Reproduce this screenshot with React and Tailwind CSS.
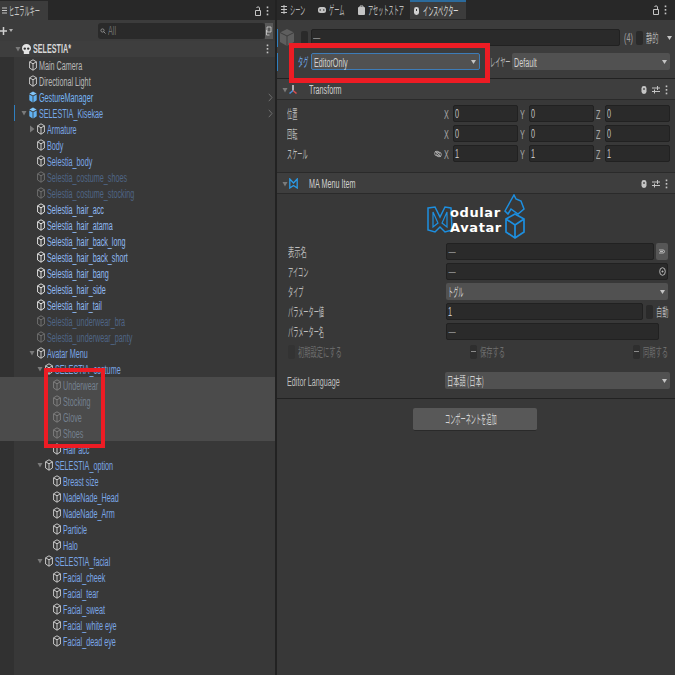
import React from "react";

const SANS = "[font-family:'Liberation_Sans','Noto_Sans_CJK_JP',sans-serif]";

function T({ children, className = "" }) {
  return (
    <span className={`inline-block origin-left scale-x-[.6] whitespace-nowrap font-['Liberation_Sans','Noto_Sans_CJK_JP',sans-serif] text-[12px] leading-none ${className}`}>
      {children}
    </span>
  );
}
function K({ children, className = "" }) {
  return (
    <span className={`inline-block origin-left scale-x-[.43] whitespace-nowrap font-['Noto_Sans_CJK_JP','Liberation_Sans',sans-serif] text-[12px] leading-none ${className}`}>
      {children}
    </span>
  );
}
function Han({ children, className = "" }) {
  return (
    <span className={`inline-block origin-left scale-x-[.52] whitespace-nowrap font-['Noto_Sans_CJK_JP','Liberation_Sans',sans-serif] text-[12px] leading-none ${className}`}>
      {children}
    </span>
  );
}

function Cube({ color = "#c8c8c8" }) {
  return (
    <svg width="8" height="12" viewBox="0 0 8 12" fill="none" stroke={color} strokeWidth="1" className="shrink-0">
      <path d="M4 .8 7.400 2.800V9L4 11.200.6 9V2.800Z M.6 2.800 4 4.800 7.400 2.800 M4 4.800V11.200" />
    </svg>
  );
}
function SolidCube() {
  return (
    <svg width="8" height="12" viewBox="0 0 8 12" className="shrink-0">
      <path d="M4 .5 7.600 2.600 4 4.600.4 2.600Z" fill="#80c4f8" />
      <path d="M.3 3.400 3.600 5.300V11.400L.3 9.300ZM7.700 3.400 4.400 5.300V11.400L7.700 9.300Z" fill="#62b2f2" />
    </svg>
  );
}
function ArrowDown({ color = "#7a7a7a" }) {
  return (
    <svg width="6" height="6" viewBox="0 0 6 6" className="shrink-0"><path d="M.5 1h5L3 5.500Z" fill={color} /></svg>
  );
}
function ArrowRight() {
  return (
    <svg width="6" height="8" viewBox="0 0 6 8" className="shrink-0"><path d="M1 .5v7L5.500 4Z" fill="#7a7a7a" /></svg>
  );
}
function Chevron() {
  return (
    <svg width="5" height="9" viewBox="0 0 5 9" fill="none" stroke="#6e6e6e" strokeWidth="1" className="shrink-0"><path d="M.8.8 4 4.500.8 8.200" /></svg>
  );
}
function Lock() {
  return (
    <svg width="6" height="10" viewBox="0 0 6 10" fill="none" stroke="#c4c4c4" strokeWidth="1" className="shrink-0">
      <path d="M.5 4.500H5.500V9.500H.5Z M4.500 4.500V2C4.500.5 1.800.5 1.500 2" />
    </svg>
  );
}
function Dots({ color = "#c4c4c4" }) {
  return (
    <svg width="3" height="10" viewBox="0 0 3 10" className="shrink-0" fill={color}>
      <rect x=".7" y=".5" width="1.600" height="1.700" /><rect x=".7" y="4" width="1.600" height="1.700" /><rect x=".7" y="7.600" width="1.600" height="1.700" />
    </svg>
  );
}
function ComponentTools() {
  return (
    <div className="ml-auto flex shrink-0 items-center gap-[5px]">
      <svg width="6" height="10" viewBox="0 0 6 10" className="shrink-0"><rect x=".5" y="1" width="5" height="8" rx="2.400" fill="#c4c4c4" /><rect x="2.400" y="3" width="1.200" height="2" fill="#383838" /></svg>
      <svg width="8" height="9" viewBox="0 0 8 9" stroke="#c4c4c4" strokeWidth="1" fill="none" className="shrink-0"><path d="M0 3h8M0 6.500h8M5.500 1v4M2.500 4.500v4" /></svg>
      <Dots />
    </div>
  );
}

const B = "#7aa6e6";
const L = "#8fb8f2";
const D = "#4f6585";
const G = "#74808f";

const rows = [
  { t: "Main Camera", d: 0, c: "#b8b8b8" },
  { t: "Directional Light", d: 0, c: "#b8b8b8" },
  { t: "GestureManager", d: 0, c: "#76b4f4", solid: true, chev: true },
  { t: "SELESTIA_Kisekae", d: 0, c: "#76a8ea", solid: true, arrow: "down", chev: true, mark: true },
  { t: "Armature", d: 1, c: B, arrow: "right" },
  { t: "Body", d: 1, c: B },
  { t: "Selestia_body", d: 1, c: B },
  { t: "Selestia_costume_shoes", d: 1, c: D, ic: "#6e6e6e" },
  { t: "Selestia_costume_stocking", d: 1, c: D, ic: "#6e6e6e" },
  { t: "Selestia_hair_acc", d: 1, c: L, ic: "#e0e0e0" },
  { t: "Selestia_hair_atama", d: 1, c: L, ic: "#e0e0e0" },
  { t: "Selestia_hair_back_long", d: 1, c: L, ic: "#e0e0e0" },
  { t: "Selestia_hair_back_short", d: 1, c: L, ic: "#e0e0e0" },
  { t: "Selestia_hair_bang", d: 1, c: L, ic: "#e0e0e0" },
  { t: "Selestia_hair_side", d: 1, c: L, ic: "#e0e0e0" },
  { t: "Selestia_hair_tail", d: 1, c: L, ic: "#e0e0e0" },
  { t: "Selestia_underwear_bra", d: 1, c: D, ic: "#6e6e6e" },
  { t: "Selestia_underwear_panty", d: 1, c: D, ic: "#6e6e6e" },
  { t: "Avatar Menu", d: 1, c: B, arrow: "down" },
  { t: "SELESTIA_costume", d: 2, c: B, arrow: "down" },
  { t: "Underwear", d: 3, c: G, ic: "#7d7d7d", sel: true },
  { t: "Stocking", d: 3, c: G, ic: "#7d7d7d", sel: true },
  { t: "Glove", d: 3, c: G, ic: "#7d7d7d", sel: true },
  { t: "Shoes", d: 3, c: G, ic: "#7d7d7d", sel: true },
  { t: "Hair acc", d: 3, c: B },
  { t: "SELESTIA_option", d: 2, c: B, arrow: "down" },
  { t: "Breast size", d: 3, c: B },
  { t: "NadeNade_Head", d: 3, c: B },
  { t: "NadeNade_Arm", d: 3, c: B },
  { t: "Particle", d: 3, c: B },
  { t: "Halo", d: 3, c: B },
  { t: "SELESTIA_facial", d: 2, c: B, arrow: "down" },
  { t: "Facial_cheek", d: 3, c: B },
  { t: "Facial_tear", d: 3, c: B },
  { t: "Facial_sweat", d: 3, c: B },
  { t: "Facial_white eye", d: 3, c: B },
  { t: "Facial_dead eye", d: 3, c: B },
];

const indent = ["pl-[21px]", "pl-[29px]", "pl-[37px]", "pl-[45px]"];

function Row({ r }) {
  return (
    <div className={`relative flex h-4 items-center pr-[2px] ${r.sel ? "bg-[#4b4b4b]" : "bg-[linear-gradient(90deg,#313131_0,#313131_14px,#383838_14px)]"} ${indent[r.d]}`}>
      {r.mark && <div className="absolute left-[14px] top-0 h-full w-px bg-[#2f7fc0]" />}
      <div className="flex w-2 shrink-0 items-center">
        {r.arrow === "down" && <ArrowDown />}
        {r.arrow === "right" && <ArrowRight />}
      </div>
      {r.solid ? <SolidCube /> : <Cube color={r.ic || "#c8c8c8"} />}
      <div className="ml-[2px] min-w-0 flex-1 overflow-visible">
        <T className="align-middle"><span style={{ color: r.c }}>{r.t}</span></T>
      </div>
      {r.chev && <Chevron />}
    </div>
  );
}

function Hierarchy() {
  return (
    <div className="flex h-full w-[275px] shrink-0 flex-col bg-[#383838]">
      <div className="flex h-[20px] items-end bg-[#282828]">
        <div className="flex h-[19px] w-[48px] items-center gap-[2px] bg-[#3c3c3c] pl-[2px]">
          <svg width="5" height="7" viewBox="0 0 5 7" stroke="#c4c4c4" className="shrink-0"><path d="M0 1h5M0 3.500h5M0 6h5" /></svg>
          <K className="text-[#c8c8c8]">ヒエラルキー</K>
        </div>
        <div className="ml-auto flex h-[19px] items-center gap-[5px] pr-[6px]">
          <Lock /><Dots />
        </div>
      </div>
      <div className="flex h-[21px] items-center bg-[#3c3c3c] pr-[2px]">
        <svg width="7" height="8" viewBox="0 0 7 8" stroke="#d0d0d0" strokeWidth="1.500" className="shrink-0"><path d="M0 4h7M3.500 0v8" /></svg>
        <svg width="4" height="3" viewBox="0 0 4 3" className="ml-[2px] shrink-0"><path d="M0 0h4L2 3Z" fill="#b0b0b0" /></svg>
        <div className="ml-[85px] flex h-[16px] flex-1 items-center rounded-[3px] bg-[#2a2a2a] pl-[2px]">
          <svg width="6" height="6" viewBox="0 0 6 6" fill="none" stroke="#8a8a8a" className="shrink-0"><circle cx="2.500" cy="2.500" r="1.600" /><path d="M3.500 3.500 5.500 5.500" /></svg>
          <T className="ml-[2px] text-[#6e6e6e]">All</T>
        </div>
        <div className="flex h-[16px] w-[8px] shrink-0 items-center justify-center bg-[#585858]">
          <svg width="6" height="10" viewBox="0 0 6 10" fill="none" stroke="#d0d0d0" strokeWidth=".8"><path d="M1 1h4v5H1ZM0.500 4v5h3" /></svg>
        </div>
      </div>
      <div className="flex h-[16px] items-center bg-[#3e3e3e] pl-[15px]">
        <div className="w-[7px] shrink-0"><ArrowDown /></div>
        <svg width="9" height="11" viewBox="0 0 9 11" className="shrink-0">
          <path d="M4.500 0C7 0 9 1.800 9 4.300c0 1.500-.7 2.600-1.800 3.300V10H1.800V7.600C.7 6.900 0 5.800 0 4.300 0 1.800 2 0 4.500 0Z" fill="#e4e4e4" />
          <circle cx="2.800" cy="4.600" r="1.200" fill="#333" /><circle cx="6.200" cy="4.600" r="1.200" fill="#333" />
        </svg>
        <T className="ml-[2px] font-bold text-[#d6d6d6]">SELESTIA*</T>
        <div className="ml-auto pr-[6px]"><Dots /></div>
      </div>
      <div className="flex flex-1 flex-col">
        {rows.map((r) => <Row key={r.t} r={r} />)}
        <div className="flex-1 bg-[linear-gradient(90deg,#313131_0,#313131_14px,#383838_14px)]" />
      </div>
    </div>
  );
}

function Tab({ w, icon, children, active }) {
  return (
    <div className={`flex h-[19px] items-center gap-[3px] pl-[4px] ${w} ${active ? "border-t-2 border-[#2c6b9c] bg-[#3c3c3c]" : ""}`}>
      {icon}
      <K className={active ? "text-[#dcdcdc]" : "text-[#bdbdbd]"}>{children}</K>
    </div>
  );
}

function Field({ className = "", children }) {
  return <div className={`flex h-[17px] items-center rounded-[2px] border border-[#212121] bg-[#2a2a2a] pl-[1px] ${className}`}>{children}</div>;
}
function Dash() { return <T className="pl-[1px] text-[#8a8a8a]">—</T>; }
function Check({ className = "", children }) {
  return <div className={`flex h-[14px] w-[7px] shrink-0 items-center justify-center rounded-[2px] bg-[#2a2a2a] ${className}`}>{children}</div>;
}
function Select({ className = "", children }) {
  return (
    <div className={`flex h-[17px] items-center rounded-[2px] bg-[#515151] pl-[2px] pr-[3px] ${className}`}>
      <div className="min-w-0 flex-1">{children}</div>
      <svg width="5" height="4" viewBox="0 0 5 4" className="shrink-0"><path d="M0 0h5L2.500 4Z" fill="#c4c4c4" /></svg>
    </div>
  );
}

function Vec({ label, extra, v, top }) {
  return (
    <div className={`flex h-[17px] items-center pl-[10px] ${top}`}>
      <div className="w-[147px] shrink-0"><K className="text-[#bdbdbd]">{label}</K></div>
      <div className="flex w-[8px] shrink-0 justify-center">{extra}</div>
      {["X", "Y", "Z"].map((a) => (
        <div key={a} className="flex w-[76px] shrink-0 items-center">
          <div className="w-[11px] shrink-0 pl-[2px]"><T className="text-[#a8a8a8]">{a}</T></div>
          <Field className="w-[64.500px]"><T className="text-[#c4c4c4]">{v}</T></Field>
        </div>
      ))}
    </div>
  );
}

function CompHeader({ icon, title }) {
  return (
    <div className="flex h-[21px] items-center border-b border-[#2a2a2a] bg-[#3e3e3e] pl-[5px] pr-[7px] pt-[1px]">
      <div className="w-[7px] shrink-0"><ArrowDown /></div>
      <div className="flex w-[20px] shrink-0 items-center">{icon}</div>
      <T className="text-[#d0d0d0]">{title}</T>
      <ComponentTools />
    </div>
  );
}

function Prop({ label, top = "mt-[3px]", children, kana = true }) {
  return (
    <div className={`flex h-[17px] items-center pl-[11px] ${top}`}>
      <div className="w-[158px] shrink-0">
        {kana ? <K className="text-[#bdbdbd]">{label}</K> : <Han className="text-[#bdbdbd]">{label}</Han>}
      </div>
      {children}
    </div>
  );
}

function Logo() {
  return (
    <div className="flex h-[49px] justify-center">
      <div className="relative h-[46px] w-[98px]">
        <svg width="98" height="46" viewBox="0 0 98 46" fill="none" className="absolute left-0 top-0">
          <path d="M1 14 8 13 13 23 18 13 24 14 25 36 18 38 13 33 8 38 1 36Z" stroke="#1d8fe0" strokeWidth="1.500" />
          <path d="M6 18 6 33 11 29Z M20 18 20 33 15 29Z" stroke="#1d8fe0" strokeWidth="1.200" />
          <path d="M87 1 89 5 94 7 97 15 91 20 84 15 81 20 78 17 83 8Z" stroke="#1d8fe0" strokeWidth="1.500" />
          <path d="M88 20 97 25V38L88 44 79 38V25Z M79 25 88 31 97 25 M88 31V44" stroke="#1d8fe0" strokeWidth="1.700" />
        </svg>
        <div className="absolute left-[23px] top-[12px] font-['DejaVu_Sans',sans-serif] text-[13px] font-bold leading-none tracking-[.6px] text-white">odular</div>
        <div className="absolute left-[23px] top-[27px] font-['DejaVu_Sans',sans-serif] text-[13px] font-bold leading-none tracking-[.6px] text-white">Avatar</div>
      </div>
    </div>
  );
}

function Inspector() {
  return (
    <div className="flex h-full w-[400px] shrink-0 flex-col overflow-hidden border-l-2 border-[#222] bg-[#383838]">
      <div className="flex h-[20px] items-start bg-[#282828]">
        <Tab w="w-[37px]" icon={<svg width="6" height="9" viewBox="0 0 6 9" stroke="#c4c4c4" className="shrink-0"><path d="M0 1.500h6M0 4.500h6M0 7.500h6M3 0v9" /></svg>}>シーン</Tab>
        <Tab w="w-[40px]" icon={<svg width="8" height="6" viewBox="0 0 8 6" className="shrink-0"><rect width="8" height="6" rx="2.500" fill="#c4c4c4" /><circle cx="2.200" cy="3" r=".8" fill="#333" /><circle cx="5.800" cy="3" r=".8" fill="#333" /></svg>}>ゲーム</Tab>
        <Tab w="w-[56px]" icon={<svg width="7" height="10" viewBox="0 0 7 10" className="shrink-0"><rect y="2" width="7" height="8" rx="1" fill="#c4c4c4" /><path d="M2 3V1h3v2" stroke="#c4c4c4" fill="none" /></svg>}>アセットストア</Tab>
        <Tab w="w-[56px]" active icon={<svg width="5" height="8" viewBox="0 0 5 8" className="mr-[1px] shrink-0"><rect width="5" height="8" rx="2.400" fill="#d0d0d0" /><rect x="2" y="2" width="1" height="2" fill="#333" /></svg>}>インスペクター</Tab>
        <div className="ml-auto flex h-[19px] items-center gap-[5px] pr-[8px]"><Lock /><Dots /></div>
      </div>

      <div className="relative h-[59px] shrink-0 border-b border-[#222] bg-[#3c3c3c] pl-[3px] pr-[5px]">
        <div className="absolute left-0 top-[9px] h-[18px] w-px bg-[#2f7fc0]" />
        <div className="absolute left-0 top-[33px] h-[18px] w-px bg-[#2f7fc0]" />
        <div className="mt-[9px] flex h-[17px] items-center">
          <svg width="14" height="17" viewBox="0 0 14 17" className="shrink-0"><path d="M7 0 14 3.500V13L7 17 0 13V3.500Z" fill="#5e5e5e" /><path d="M7 7 14 3.500M7 7 0 3.500M7 7V17" stroke="#3c3c3c" /></svg>
          <Check className="ml-[7px] h-[13px]" />
          <Field className="ml-[3px] w-[309px] shrink-0"><T className="text-[#8a8a8a]">—</T></Field>
          <T className="ml-[4px] w-[12px] shrink-0 text-[#a0a0a0]">(4)</T>
          <Check className="h-[14px]" />
          <Han className="ml-[3px] w-[20px] shrink-0 text-[#b4b4b4]">静的</Han>
          <svg width="5" height="4" viewBox="0 0 5 4" className="ml-[1px] shrink-0"><path d="M0 0h5L2.500 4Z" fill="#c4c4c4" /></svg>
        </div>
        <div className="mt-[7px] flex h-[17px] items-center pl-[18px]">
          <div className="w-[13px] shrink-0"><K className="text-[#6ea6e8]">タグ</K></div>
          <Select className="w-[169px] shrink-0 border border-[#3d7cb8] bg-[#4f4f4f]"><T className="text-[#d0d0d0]">EditorOnly</T></Select>
          <div className="ml-[10px] w-[22px] shrink-0"><K className="text-[#bdbdbd]">レイヤー</K></div>
          <Select className="w-[158px] shrink-0"><T className="text-[#d0d0d0]">Default</T></Select>
        </div>
      </div>

      <CompHeader
        title="Transform"
        icon={<svg width="8" height="10" viewBox="0 0 8 10" className="shrink-0"><path d="M4 0v6" stroke="#d8d8d8" strokeWidth="1.500" /><path d="M4 5.500 7.500 8.500" stroke="#e05050" strokeWidth="1.500" /><path d="M4 5.500 .5 8.500" stroke="#4a90d8" strokeWidth="1.500" /></svg>}
      />
      <div className="h-[73px] shrink-0 border-b border-[#2a2a2a] pt-[5px]">
        <Vec label="位置" v="0" />
        <Vec label="回転" v="0" top="mt-[3px]" />
        <Vec
          label="スケール"
          v="1"
          top="mt-[3px]"
          extra={<svg width="8" height="8" viewBox="0 0 8 8" fill="none" stroke="#a8a8a8" className="shrink-0"><circle cx="3" cy="3.500" r="2.300" /><circle cx="5" cy="4.500" r="2.300" /><path d="M1 1l6 6" /></svg>}
        />
      </div>

      <CompHeader
        title="MA Menu Item"
        icon={<svg width="9" height="11" viewBox="0 0 9 11" fill="none" stroke="#2a9be8" strokeWidth="1.300" className="shrink-0"><path d="M.8 1 4.500 5 8.200 1V10L4.500 7.500.8 10Z" /></svg>}
      />
      <Logo />
      <div className="border-b border-[#222] pb-[9px]">
        <Prop label="表示名" kana={false} top="mt-0">
          <Field className="w-[208px] shrink-0"><Dash /></Field>
          <div className="ml-[2px] flex h-[17px] w-[12px] shrink-0 items-center justify-center rounded-[2px] bg-[#565656]">
            <svg width="6" height="5" viewBox="0 0 6 5" fill="none" stroke="#d0d0d0" strokeWidth=".8"><path d="M0 1h4a1.500 1.500 0 0 1 0 3H0M1 2.500h3" /></svg>
          </div>
        </Prop>
        <Prop label="アイコン">
          <Field className="w-[222px] shrink-0 pr-[1px]">
            <Dash />
            <svg width="7" height="9" viewBox="0 0 7 9" fill="none" stroke="#b8b8b8" className="ml-auto shrink-0"><ellipse cx="3.500" cy="4.500" rx="2.800" ry="3.800" /><circle cx="3.500" cy="4.500" r=".6" fill="#b8b8b8" /></svg>
          </Field>
        </Prop>
        <Prop label="タイプ">
          <Select className="w-[222px] shrink-0"><K className="text-[#d0d0d0]">トグル</K></Select>
        </Prop>
        <Prop label="パラメーター値">
          <Field className="w-[197px] shrink-0"><T className="text-[#c8c8c8]">1</T></Field>
          <Check className="ml-[3px] h-[14px]" />
          <Han className="ml-[3px] shrink-0 text-[#b4b4b4]">自動</Han>
        </Prop>
        <Prop label="パラメーター名">
          <Field className="w-[213px] shrink-0"><Dash /></Field>
        </Prop>
        <div className="mt-[3px] flex h-[17px] items-center pl-[11px]">
          <Check className="bg-[#333]" />
          <div className="ml-[3px] w-[172px] shrink-0"><Han className="text-[#6e6e6e]">初期設定にする</Han></div>
          <Check className="bg-[#2e2e2e]"><span className="h-px w-[5px] bg-[#8a8a8a]" /></Check>
          <div className="ml-[3px] w-[153px] shrink-0"><Han className="text-[#6e6e6e]">保存する</Han></div>
          <Check className="bg-[#2e2e2e]"><span className="h-px w-[5px] bg-[#8a8a8a]" /></Check>
          <div className="ml-[3px] w-[30px] shrink-0"><Han className="text-[#6e6e6e]">同期する</Han></div>
        </div>
        <div className="mt-[12px] flex h-[17px] items-center pl-[10px]">
          <div className="w-[158px] shrink-0"><T className="text-[#bdbdbd]">Editor Language</T></div>
          <Select className="w-[225px] shrink-0"><Han className="text-[#d0d0d0]">日本語 (日本)</Han></Select>
        </div>
      </div>
      <div className="flex justify-center pr-[3px] pt-[9px]">
        <div className="flex h-[23px] w-[124px] items-center justify-center rounded-[2px] border-b border-[#2a2a2a] bg-[#585858]">
          <K className="translate-x-[31px] text-[#d4d4d4]">コンポーネントを追加</K>
        </div>
      </div>
    </div>
  );
}

export default function App() {
  return (
    <div className={`relative flex h-[675px] w-[675px] overflow-hidden bg-[#383838] ${SANS}`}>
      <Hierarchy />
      <Inspector />
      <div className="absolute left-[44px] top-[368px] h-[80px] w-[61px] border-[4px] border-[#ed1c24]" />
      <div className="absolute left-[289px] top-[43px] h-[40px] w-[201px] border-[5px] border-[#ed1c24]" />
    </div>
  );
}
